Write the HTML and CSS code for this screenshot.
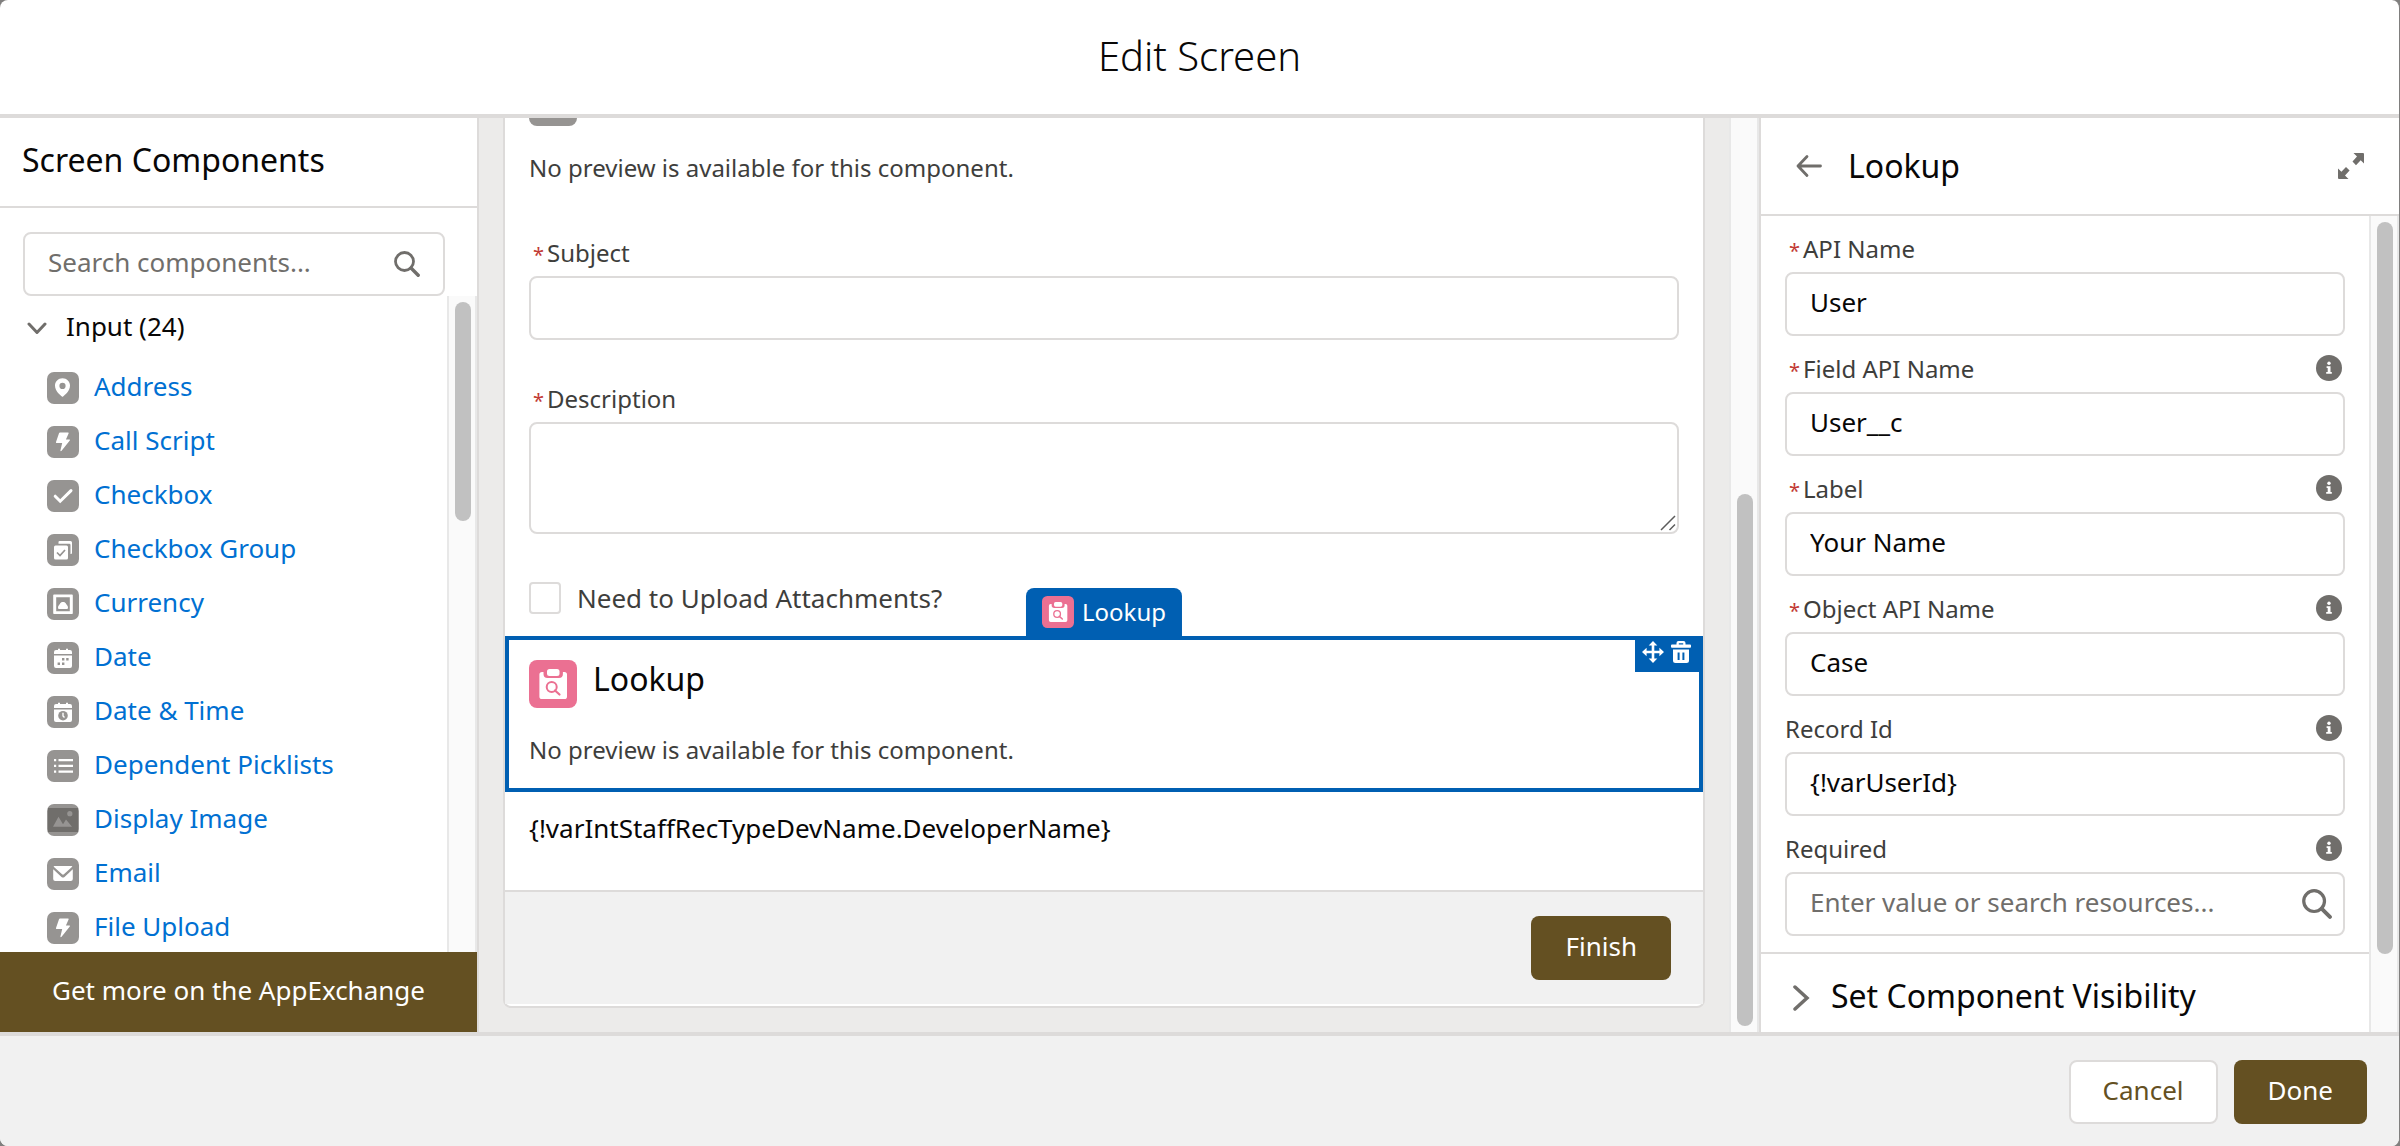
FILE: index.html
```html
<!DOCTYPE html>
<html lang="en">
<head>
<meta charset="utf-8">
<title>Edit Screen</title>
<link rel="stylesheet" href="styles.css">
</head>
<body>
<svg class="sprite" aria-hidden="true">
  <symbol id="i-search" viewBox="0 0 26 26"><circle cx="10.5" cy="10.5" r="9" fill="none" stroke="currentColor" stroke-width="2.8"/><path d="M17 17l7.200 7.200" fill="none" stroke="currentColor" stroke-width="3.400" stroke-linecap="round"/></symbol>
  <symbol id="i-info" viewBox="0 0 26 26"><circle cx="13" cy="13" r="13" fill="currentColor"/><circle cx="13" cy="8.3" r="1.7" fill="#fff"/><path d="M10.6 11.3h3.9v5.7h1.3v1.7h-5.6V17h1.5v-4h-1.1z" fill="#fff"/></symbol>
  <symbol id="i-lookup" viewBox="0 0 48 48"><rect width="48" height="48" rx="8" fill="#eb7092"/><path d="M14.500 12H13q-2.600 0-2.600 2.600v21.800q0 2.600 2.600 2.600h22.400q2.600 0 2.600-2.600V14.600q0-2.600-2.600-2.600h-1.500v2q0 4-4 4H18.500q-4 0-4-4z" fill="#fff"/><rect x="18" y="9" width="12.500" height="7" rx="2.500" fill="#fff"/><circle cx="22.700" cy="27" r="5" fill="none" stroke="#eb7092" stroke-width="2"/><path d="M26 30.500l4.500 4" stroke="#eb7092" stroke-width="2.200" stroke-linecap="round"/></symbol>
  <symbol id="i-pin" viewBox="0 0 32 32"><path fill-rule="evenodd" d="M15.500 6.200c-4.300 0-7.500 3.300-7.500 7.300 0 5.500 5 9.300 6.900 11q.6.500 1.200 0c1.900-1.700 6.900-5.500 6.900-11 0-4-3.200-7.300-7.500-7.300zm0 4.600a3.100 3.100 0 1 1 0 6.200 3.100 3.100 0 0 1 0-6.200z" fill="#fff"/></symbol>
  <symbol id="i-bolt" viewBox="0 0 32 32"><path d="M13 6.500h8q1 0 .6 1l-2.700 6h3.500q1 0 .4.900l-8.200 10.400q-1 1-1.200-.200l1.800-7.600H9.500q-.8 0-.5-.9l3-8.800q.3-.8 1-.8z" fill="#fff"/></symbol>
  <symbol id="i-check" viewBox="0 0 32 32"><path d="M8.200 16.200l5 5L24 10.600" fill="none" stroke="#fff" stroke-width="3" stroke-linecap="round"/></symbol>
  <symbol id="i-checks" viewBox="0 0 32 32"><path d="M11.500 8q0-1 1-1h11q1.500 0 1.500 1.500v10.500q0 1-1 1h-.5V11q0-1.200-1.200-1.200H11.500z" fill="#fff"/><rect x="7" y="11.500" width="14" height="14" rx="1.500" fill="#fff"/><path d="M10 18.500l3 3 5-5.500" fill="none" stroke="#969492" stroke-width="1.700"/></symbol>
  <symbol id="i-currency" viewBox="0 0 32 32"><path fill-rule="evenodd" d="M7 6.500h18a.8.8 0 0 1 .8.8v17.900a.8.8 0 0 1-.8.800H7a.8.8 0 0 1-.8-.8V7.300a.8.8 0 0 1 .8-.8zM9.200 9.300v14h13.600v-14z" fill="#fff"/><path d="M11 19.500c0-1.500 1-2.200 1.500-3 1-2 2-2.500 3.500-2.500s2.500.5 3.500 2.500c.5.800 1.500 1.500 1.500 3q0 1.500-1 1.500h-8q-1 0-1-1.500z" fill="#fff"/></symbol>
  <symbol id="i-date" viewBox="0 0 32 32"><path d="M7 12V10q0-2 2-2h2V6.700h2V8h6V6.700h2V8h2q2 0 2 2v2zM7 13.500h18V24q0 2-2 2H9q-2 0-2-2z" fill="#fff"/><path d="M15 16h2.400v2.400H15zm4.200 0h2.400v2.400h-2.400zM10.600 20.600H13V23h-2.400zm4.400 0h2.400V23H15z" fill="#969492"/></symbol>
  <symbol id="i-datetime" viewBox="0 0 32 32"><path d="M7 12V10q0-2 2-2h2V6.700h2V8h6V6.700h2V8h2q2 0 2 2v2zM7 13.500h18V24q0 2-2 2H9q-2 0-2-2z" fill="#fff"/><circle cx="16" cy="19.700" r="4.800" fill="#969492"/><path d="M16 16.800v3.200l1.500 1.500" fill="none" stroke="#fff" stroke-width="1.400"/></symbol>
  <symbol id="i-list" viewBox="0 0 32 32"><path d="M7 9h2.200v2.200H7zm4.500 0H26v2.200H11.500zM7 14.800h2.200V17H7zm4.500 0H26V17H11.500zM7 20.600h2.200v2.200H7zm4.500 0H26v2.200H11.500z" fill="#fff"/></symbol>
  <symbol id="i-image" viewBox="0 0 32 32"><path d="M1 4h30v24H1z" fill="#706e6b"/><path d="M6 22.800l5.500-10 4.500 7.400 3-4.700 6 7.300z" fill="#969492"/><circle cx="22.800" cy="9.700" r="2.600" fill="#969492"/></symbol>
  <symbol id="i-mail" viewBox="0 0 32 32"><path d="M7.500 8h17q1.500 0 .4 1l-8 7.300q-.9.800-1.800 0L7 9q-1-1 .5-1z" fill="#fff"/><path d="M6.200 11.200l8.300 7.700q1.500 1.200 3 0l8.300-7.700V21q0 2-2 2H8.200q-2 0-2-2z" fill="#fff"/></symbol>
  <symbol id="i-chevron" viewBox="0 0 20 20"><path d="M2 6l8 8.500L18 6" fill="none" stroke="currentColor" stroke-width="3" stroke-linecap="round" stroke-linejoin="round"/></symbol>
  <symbol id="i-right" viewBox="0 0 26 26"><path d="M6 2l12 11L6 24" fill="none" stroke="currentColor" stroke-width="3.500" stroke-linecap="round"/></symbol>
  <symbol id="i-back" viewBox="0 0 26 26"><path d="M24.500 13H2M11 3.500L2 13l9 9.500" fill="none" stroke="currentColor" stroke-width="2.800" stroke-linecap="round" stroke-linejoin="round"/></symbol>
  <symbol id="i-expand" viewBox="0 0 26 26"><path d="M15.500 0H25q1 0 1 1v9.500l-3.300-3.300-4.700 5L14.500 8.500 19 3.600zM0 15.500l3.400 3.300 4.600-4.800 3.600 3.500L7 22.400l3.500 3.600H1q-1 0-1-1z" fill="currentColor"/></symbol>
  <symbol id="i-move" viewBox="0 0 22 22"><path d="M11 0l4.300 4.600h-3v5.100h5.100v-3L22 11l-4.600 4.300v-3h-5.100v5.100h3L11 22l-4.300-4.600h3v-5.100H4.600v3L0 11l4.600-4.300v3h5.100V4.600h-3z" fill="#fff"/></symbol>
  <symbol id="i-trash" viewBox="0 0 22 22"><path fill-rule="evenodd" d="M2 3.500h4.500V2q0-2 2-2h5q2 0 2 2v1.500H20q1 0 1 1V6q0 .8-1 .8H2Q1 6.800 1 6V4.500q0-1 1-1zm6.800 0h4.400V2.200H8.800zM3 8.500h16v11q0 2.500-2.500 2.500h-11Q3 22 3 19.500zm4.600 3v7.500h2v-7.500zm4.800 0v7.500h2v-7.500z" fill="#fff"/></symbol>
  <symbol id="i-grip" viewBox="0 0 16 16"><path d="M1 15L15 1M9.500 15L15 9.500" fill="none" stroke="#5c5c5c" stroke-width="1.500"/></symbol>
</svg>

<header class="modal-header"><h1>Edit Screen</h1></header>

<main class="workspace">
  <aside class="palette">
    <h2 class="palette-title">Screen Components</h2>
    <div class="search">
      <input class="control" type="text" aria-label="Search components" placeholder="Search components...">
      <svg class="icon"><use href="#i-search"/></svg>
    </div>
    <div class="scroller">
      <div class="palette-body">
        <button class="group"><svg class="chevron"><use href="#i-chevron"/></svg><span class="text">Input (24)</span></button>
        <ul class="items">
          <li><svg class="tile"><use href="#i-pin"/></svg><a class="text" href="#">Address</a></li>
          <li><svg class="tile"><use href="#i-bolt"/></svg><a class="text" href="#">Call Script</a></li>
          <li><svg class="tile"><use href="#i-check"/></svg><a class="text" href="#">Checkbox</a></li>
          <li><svg class="tile"><use href="#i-checks"/></svg><a class="text" href="#">Checkbox Group</a></li>
          <li><svg class="tile"><use href="#i-currency"/></svg><a class="text" href="#">Currency</a></li>
          <li><svg class="tile"><use href="#i-date"/></svg><a class="text" href="#">Date</a></li>
          <li><svg class="tile"><use href="#i-datetime"/></svg><a class="text" href="#">Date &amp; Time</a></li>
          <li><svg class="tile"><use href="#i-list"/></svg><a class="text" href="#">Dependent Picklists</a></li>
          <li><svg class="tile"><use href="#i-image"/></svg><a class="text" href="#">Display Image</a></li>
          <li><svg class="tile"><use href="#i-mail"/></svg><a class="text" href="#">Email</a></li>
          <li><svg class="tile"><use href="#i-bolt"/></svg><a class="text" href="#">File Upload</a></li>
        </ul>
      </div>
      <div class="track"><div class="thumb thumb-palette"></div></div>
    </div>
    <button class="exchange">Get more on the AppExchange</button>
  </aside>

  <section class="canvas">
    <div class="stage">
      <div class="card">
        <div class="preview">
          <div class="preview-head"><span class="tile-large"></span></div>
          <p class="note">No preview is available for this component.</p>
        </div>
        <div class="field">
          <label class="label" for="subject"><abbr class="req">*</abbr>Subject</label>
          <input class="control" id="subject" type="text">
        </div>
        <div class="field">
          <label class="label" for="description"><abbr class="req">*</abbr>Description</label>
          <div class="area-box">
            <textarea class="control area" id="description"></textarea>
            <svg class="grip"><use href="#i-grip"/></svg>
          </div>
        </div>
        <div class="check">
          <input class="box" id="upload" type="checkbox">
          <label for="upload">Need to Upload Attachments?</label>
        </div>
        <div class="preview selected">
          <div class="tab"><svg class="tab-icon"><use href="#i-lookup"/></svg>Lookup</div>
          <div class="actions">
            <button aria-label="Move"><svg class="action-icon"><use href="#i-move"/></svg></button>
            <button aria-label="Delete"><svg class="action-icon"><use href="#i-trash"/></svg></button>
          </div>
          <div class="preview-head"><svg class="large-icon"><use href="#i-lookup"/></svg><h3>Lookup</h3></div>
          <p class="note">No preview is available for this component.</p>
        </div>
        <p class="output">{!varIntStaffRecTypeDevName.DeveloperName}</p>
        <div class="card-footer"><button class="btn brand">Finish</button></div>
      </div>
    </div>
    <div class="track"><div class="thumb thumb-canvas"></div></div>
  </section>

  <aside class="inspector">
    <div class="inspector-head">
      <button aria-label="Back"><svg class="icon"><use href="#i-back"/></svg></button>
      <h2>Lookup</h2>
      <button aria-label="Expand"><svg class="icon"><use href="#i-expand"/></svg></button>
    </div>
    <div class="scroller">
      <div class="inspector-body">
        <div class="props">
          <div class="prop">
            <div class="prop-head"><label class="label" for="api"><abbr class="req">*</abbr>API Name</label></div>
            <input class="control" id="api" type="text" value="User">
          </div>
          <div class="prop">
            <div class="prop-head"><label class="label" for="fieldapi"><abbr class="req">*</abbr>Field API Name</label><svg class="icon"><use href="#i-info"/></svg></div>
            <input class="control" id="fieldapi" type="text" value="User__c">
          </div>
          <div class="prop">
            <div class="prop-head"><label class="label" for="lab"><abbr class="req">*</abbr>Label</label><svg class="icon"><use href="#i-info"/></svg></div>
            <input class="control" id="lab" type="text" value="Your Name">
          </div>
          <div class="prop">
            <div class="prop-head"><label class="label" for="objapi"><abbr class="req">*</abbr>Object API Name</label><svg class="icon"><use href="#i-info"/></svg></div>
            <input class="control" id="objapi" type="text" value="Case">
          </div>
          <div class="prop">
            <div class="prop-head"><label class="label" for="record">Record Id</label><svg class="icon"><use href="#i-info"/></svg></div>
            <input class="control" id="record" type="text" value="{!varUserId}">
          </div>
          <div class="prop">
            <div class="prop-head"><label class="label" for="required">Required</label><svg class="icon"><use href="#i-info"/></svg></div>
            <div class="lookup-box">
              <input class="control" id="required" type="text" placeholder="Enter value or search resources...">
              <svg class="search-icon"><use href="#i-search"/></svg>
            </div>
          </div>
        </div>
        <button class="section"><svg class="icon"><use href="#i-right"/></svg><span class="text">Set Component Visibility</span></button>
      </div>
      <div class="track"><div class="thumb thumb-inspector"></div></div>
    </div>
  </aside>
</main>

<footer class="modal-footer">
  <button class="btn neutral">Cancel</button>
  <button class="btn brand">Done</button>
</footer>
</body>
</html>
```

FILE: styles.css
```css
* { box-sizing: border-box; }
html, body { margin: 0; height: 100%; }
html { background: #807f7e; }
body {
  display: flex;
  flex-direction: column;
  overflow: hidden;
  border-right: 1px solid #807f7e;
  border-radius: 8px;
  background: #fff;
  color: #080707;
  font: 26px/40px "Noto Sans", "Open Sans", sans-serif;
}
h1, h2, h3, p, ul { margin: 0; padding: 0; font-weight: 400; }
button { font: inherit; color: inherit; border: 0; padding: 0; background: none; cursor: pointer; }
svg { display: block; flex: none; }
.sprite { position: absolute; width: 0; height: 0; }
.icon { width: 26px; height: 26px; color: #706e6b; }
.text { padding-bottom: 4px; }

.modal-header { flex: none; height: 118px; padding-top: 30px; border-bottom: 4px solid #dddbda; text-align: center; }
.modal-header h1 { font-size: 40px; line-height: 52px; font-weight: 300; }
.modal-footer {
  flex: none; display: flex; justify-content: flex-end; gap: 16px;
  height: 114px; padding: 24px 32px 0; border-top: 4px solid #dddbda; background: #f1f1f1;
}
.workspace { flex: 1; min-height: 0; display: grid; grid-template-columns: 479px minmax(0, 1fr) 640px; }
.workspace > * { min-height: 0; }

.btn { height: 64px; padding: 0 32px 4px; border: 2px solid transparent; border-radius: 8px; }
.brand { background: #645022; color: #fff; }
.neutral { background: #fff; border-color: #dddbda; color: #645022; }

.control {
  display: block; width: 100%; height: 64px; padding: 0 23px 4px;
  border: 2px solid #dddbda; border-radius: 8px; background: #fff;
  font: inherit; color: #080707; outline: 0;
}
.control::placeholder { color: #706e6b; opacity: 1; }
.area { height: 112px; resize: none; }
.area-box { position: relative; }
.grip { position: absolute; right: 3px; bottom: 3px; width: 16px; height: 16px; }
.label { display: block; color: #3e3e3c; font-size: 24px; line-height: 34px; }
.req { margin: 0 3px 0 4px; color: #c23934; text-decoration: none; font-size: 20px; }

.scroller { flex: 1; min-height: 0; display: flex; overflow: hidden; }
.track { flex: none; display: flex; flex-direction: column; width: 30px; padding: 6px; border: solid #e8e8e8; border-width: 0 2px; background: #fafafa; }
.thumb { width: 16px; border-radius: 8px; background: #c1c1c1; }
.thumb-palette { height: 34%; }
.thumb-canvas { height: 59%; margin-top: auto; }
.thumb-inspector { height: 91%; }

.palette { display: flex; flex-direction: column; border-right: 2px solid #dddbda; }
.palette-title { flex: none; height: 90px; padding: 20px 22px; border-bottom: 2px solid #dddbda; font-size: 32px; line-height: 44px; }
.search { display: grid; align-items: center; margin: 24px 32px 0 23px; }
.search > *, .lookup-box > * { grid-area: 1 / 1; }
.search .icon { justify-self: end; margin-right: 25px; }
.palette-body { flex: 1; min-width: 0; }
.group { display: flex; align-items: center; gap: 19px; height: 64px; padding: 0 27px; }
.chevron { width: 20px; height: 20px; color: #706e6b; }
.items { list-style: none; display: grid; gap: 14px; padding: 8px 47px 0; }
.items li { display: flex; align-items: center; gap: 15px; height: 40px; }
.items a { color: #0070d2; text-decoration: none; }
.tile { width: 32px; height: 32px; border-radius: 7px; background: #969492; }
.exchange { flex: none; height: 80px; padding-bottom: 4px; background: #645022; color: #fff; }

.canvas { display: flex; background: #ecebea; }
.stage { flex: 1; min-width: 0; display: flex; flex-direction: column; justify-content: flex-end; overflow: hidden; padding: 0 24px 24px; }
.card { flex: none; border: 2px solid #dddbda; border-radius: 8px; background: #fff; padding-bottom: 2px; }
.preview { padding: 24px; }
.preview-head { display: flex; gap: 16px; }
.preview-head h3 { font-size: 32px; line-height: 38px; }
.tile-large { width: 48px; height: 48px; border-radius: 8px; background: #969492; }
.large-icon { width: 48px; height: 48px; }
.note { margin-top: 24px; color: #3e3e3c; font-size: 24px; line-height: 36px; }
.field { padding: 26px 24px 0; }
.field + .field { padding-top: 42px; }
.field .label { height: 40px; }
.check { display: flex; align-items: center; gap: 16px; padding: 44px 24px 18px; color: #3e3e3c; }
.box { appearance: none; width: 32px; height: 32px; margin: 0; border: 2px solid #dddbda; border-radius: 4px; background: #fff; }
.selected { position: relative; border: 4px solid #005fb2; padding: 20px; }
.tab {
  position: absolute; bottom: calc(100% + 4px); left: 50%; transform: translateX(-50%);
  display: flex; align-items: center; gap: 8px; height: 48px; padding: 0 16px;
  border-radius: 8px 8px 0 0; background: #005fb2; color: #fff; font-size: 24px;
}
.tab-icon { width: 32px; height: 32px; }
.actions { position: absolute; top: -4px; right: -4px; display: flex; align-items: flex-start; gap: 6px; height: 36px; padding: 5px 11px 0 7px; background: #005fb2; }
.action-icon { width: 22px; height: 22px; }
.output { padding: 16px 24px 42px; }
.card-footer { display: flex; justify-content: flex-end; height: 114px; padding: 24px 32px; border-top: 2px solid #dddbda; background: #f1f1f1; }

.inspector { display: flex; flex-direction: column; border-left: 2px solid #dddbda; }
.inspector-head { flex: none; display: flex; align-items: center; height: 98px; padding: 0 35px; border-bottom: 2px solid #dddbda; }
.inspector-head h2 { flex: 1; margin-left: 26px; font-size: 32px; }
.inspector-body { flex: 1; min-width: 0; }
.props { padding: 16px 24px; border-bottom: 2px solid #dddbda; display: grid; gap: 16px; }
.prop-head { display: flex; justify-content: space-between; height: 40px; padding-right: 3px; }
.prop-head .icon { margin-top: 3px; }
.lookup-box { display: grid; align-items: center; }
.search-icon { justify-self: end; width: 30px; height: 30px; margin-right: 13px; color: #706e6b; }
.section { display: flex; align-items: center; gap: 16px; width: 100%; height: 88px; padding: 0 28px; font-size: 32px; white-space: nowrap; }
```
